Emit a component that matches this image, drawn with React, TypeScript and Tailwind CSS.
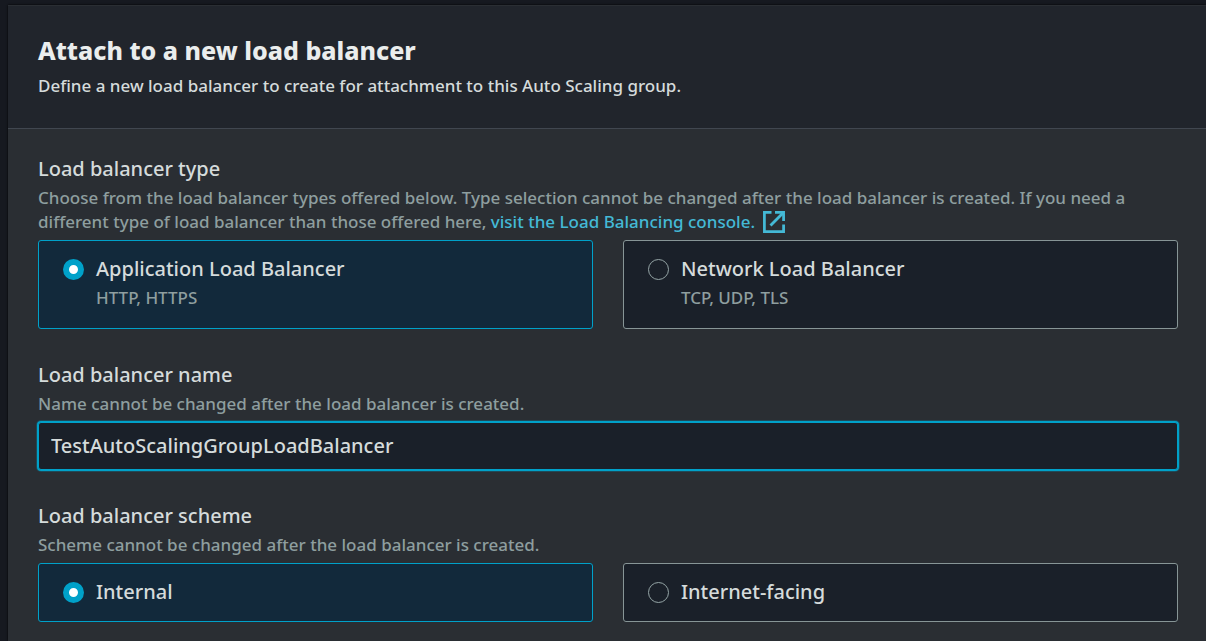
import { useState } from "react";
import type { ReactNode } from "react";

type Option = { value: string; title: string; detail?: string };

type TilesProps = {
  name: string;
  options: Option[];
  value: string;
  onChange: (value: string) => void;
};

const labelText = "text-[20px] leading-[30px] text-[#d5dbdb]";
const hintText = "mt-0.5 text-[17px] leading-6 text-[#8e9e9f]";

function ExternalIcon() {
  return (
    <svg
      viewBox="0 0 22 22"
      className="ml-2 inline-block size-[22px] align-[-5px]"
      fill="none"
      stroke="currentColor"
      strokeWidth="2.75"
      aria-hidden="true"
    >
      <path d="M8.5 1.4H1.4v19.2h19.2V13.5" />
      <path d="M12 1.4h8.6v8.6" />
      <path d="M20 2L7.5 14.5" />
    </svg>
  );
}

function Tiles({ name, options, value, onChange }: TilesProps) {
  return (
    <div className="mt-1.5 grid grid-cols-2 gap-[30px]">
      {options.map((option) => (
        <label
          key={option.value}
          className="flex cursor-pointer gap-3 rounded-[3px] border border-[#879596] bg-[#1a2029] px-6 pt-[13px] pb-3.5 has-checked:border-[#00a1c9] has-checked:bg-[#12293b]"
        >
          <input
            type="radio"
            name={name}
            value={option.value}
            checked={option.value === value}
            onChange={() => onChange(option.value)}
            className="mt-[5px] size-[21px] shrink-0 appearance-none rounded-full border border-[#95a5a6] checked:border-[6px] checked:border-[#00a1c9] checked:bg-white"
          />
          <span>
            <span className={`block ${labelText}`}>{option.title}</span>
            {option.detail && <span className={`mb-1 block ${hintText}`}>{option.detail}</span>}
          </span>
        </label>
      ))}
    </div>
  );
}

function Choice({ legend, hint, children }: { legend: string; hint: ReactNode; children: ReactNode }) {
  return (
    <fieldset>
      <legend className={labelText}>{legend}</legend>
      <p className={hintText}>{hint}</p>
      {children}
    </fieldset>
  );
}

export default function App() {
  const [type, setType] = useState("application");
  const [scheme, setScheme] = useState("internal");
  const [name, setName] = useState("TestAutoScalingGroupLoadBalancer");

  return (
    <main className="min-h-screen bg-[#161920] pt-[5px] pl-2 font-['Noto_Sans',sans-serif] font-medium">
      <section className="min-h-[calc(100vh-5px)] border-t border-[#2a2e33] bg-[#2a2e33] shadow-[0_0_2px_#000]">
        <header className="border-b border-[#414750] bg-[#21252c] pt-[26px] pr-7 pb-[30px] pl-[30px]">
          <h2 className="text-[25px] leading-9 font-extrabold text-[#eaeded]">Attach to a new load balancer</h2>
          <p className="mt-1.5 text-[17px] leading-6 text-[#d5dbdb]">
            Define a new load balancer to create for attachment to this Auto Scaling group.
          </p>
        </header>
        <div className="flex flex-col gap-[31px] pt-[25px] pr-7 pb-[18px] pl-[30px]">
          <Choice
            legend="Load balancer type"
            hint={
              <>
                Choose from the load balancer types offered below. Type selection cannot be changed after the load
                balancer is created. If you need a different type of load balancer than those offered here,{" "}
                <a href="#console" className="text-[#44b9d6]">
                  visit the Load Balancing console.
                  <ExternalIcon />
                </a>
              </>
            }
          >
            <Tiles
              name="type"
              value={type}
              onChange={setType}
              options={[
                { value: "application", title: "Application Load Balancer", detail: "HTTP, HTTPS" },
                { value: "network", title: "Network Load Balancer", detail: "TCP, UDP, TLS" },
              ]}
            />
          </Choice>
          <div>
            <label htmlFor="lb-name" className={`block ${labelText}`}>
              Load balancer name
            </label>
            <p id="lb-name-hint" className={hintText}>
              Name cannot be changed after the load balancer is created.
            </p>
            <input
              id="lb-name"
              type="text"
              aria-describedby="lb-name-hint"
              value={name}
              onChange={(event) => setName(event.target.value)}
              className="mt-1.5 block h-12 w-full rounded-[3px] border border-[#00a1c9] bg-[#1a2029] px-3 pb-0.5 text-[20px] leading-[30px] text-[#d5dbdb] shadow-[0_0_0_1px_#00a1c9,0_0_0_2px_#00a1c940] outline-none"
            />
          </div>
          <Choice legend="Load balancer scheme" hint="Scheme cannot be changed after the load balancer is created.">
            <Tiles
              name="scheme"
              value={scheme}
              onChange={setScheme}
              options={[
                { value: "internal", title: "Internal" },
                { value: "internet-facing", title: "Internet-facing" },
              ]}
            />
          </Choice>
        </div>
      </section>
    </main>
  );
}
